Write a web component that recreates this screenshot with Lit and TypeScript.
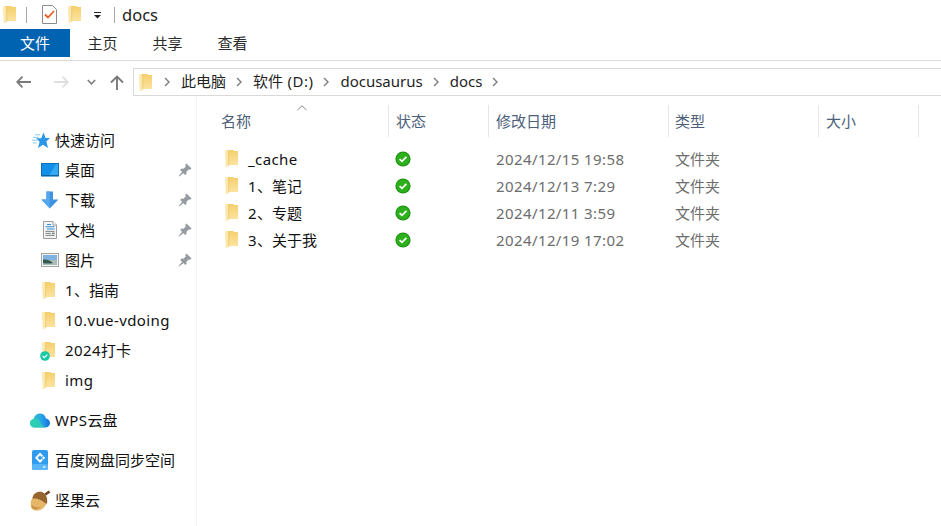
import { LitElement, html, css } from "lit";
import { customElement } from "lit/decorators.js";

let uid = 0;
const folder = () => {
  const id = "f" + uid++;
  return html`<svg class="ico-folder" width="13" height="19" viewBox="0 0 13 19">
    <defs><linearGradient id=${id} x1="0" y1="0" x2="0" y2="1"><stop offset="0" stop-color="#f5cf6c"/><stop offset="1" stop-color="#fbe3a0"/></linearGradient></defs>
    <path d="M2 1H8.5L9 2H13V16H2Z" fill="url(#${id})"/>
    <path d="M0 1.5L3.4 1V4L3.8 17L0.8 18.6Z" fill="#fae8ae"/>
    <path d="M3.4 1H4.2V16.6H3.4Z" fill="#eec765"/>
  </svg>`;
};

/* Latin and digit runs are slightly wider in the reference's UI font */
const txt = (s: string) =>
  (s.match(/[\x21-\x7e]+|[^\x21-\x7e]+/g) ?? []).map((p) =>
    /^[\x21-\x7e]/.test(p) ? html`<span class="l">${p}</span>` : p
  );

const check = html`<svg width="16" height="16" viewBox="0 0 16 16">
  <circle cx="8" cy="8" r="7.6" fill="#1f9212"/>
  <circle cx="8" cy="8" r="6.5" fill="#2cb01b"/>
  <path d="M4.6 8.1L7 10.4L11.4 5.9" fill="none" stroke="#fff" stroke-width="1.7"/>
</svg>`;

const pin = html`<svg class="pin" width="14" height="14" viewBox="0 0 14 14">
  <path d="M8.4 0.4L13.6 5.6L12 6.8L10.8 6.4L8.4 8.8L8.6 10.8L7.2 12L2.2 7L3.4 5.6L5.4 5.8L7.8 3.4L7.2 2Z" fill="#959ba1"/>
  <path d="M4.4 8.4L5.8 9.8L1.2 13.6L0.6 13Z" fill="#959ba1"/>
</svg>`;

const star = html`<svg width="18" height="17" viewBox="0 0 18 17">
  <path d="M11.5 0.5L13.6 6H18L14.4 9.6L16 16L11 12.8L6 16L7.6 9.8L4 6.2H9.2Z" fill="#2b97e6"/>
  <path d="M1 5.4H6.5M0 8.2H5.2M1 11H4.6M3 2.8H8" stroke="#8ccbf2" stroke-width="1" fill="none"/>
</svg>`;

const desktop = html`<svg width="18" height="14" viewBox="0 0 18 14">
  <rect x="0.5" y="0.5" width="17" height="12.5" fill="#0f8fe8" stroke="#0a6fb8"/>
  <path d="M8 12.5L15 1H17V12.5Z" fill="#33a9f2"/>
  <path d="M1 12.6H17" stroke="#0a5f9e" stroke-width="1"/>
</svg>`;

const download = html`<svg width="18" height="18" viewBox="0 0 18 18">
  <path d="M5.4 0.5H12V8.5H17.4L8.8 17.5L0.4 8.5H5.4Z" fill="#3d93e0"/>
  <path d="M5.4 0.5H8.8V17.5L0.4 8.5H5.4Z" fill="#56a8ee"/>
</svg>`;

const doc = html`<svg width="14" height="18" viewBox="0 0 14 18">
  <path d="M0.5 0.5H10L13.5 4V17.5H0.5Z" fill="#f3f3f3" stroke="#9d9d9d"/>
  <path d="M10 0.5V4H13.5" fill="#fff" stroke="#9d9d9d"/>
  <path d="M4 3.5H8M2.5 5.8H11.5M4 8H11.5" stroke="#2d90dd" stroke-width="1.1"/>
  <path d="M2.5 10.4H11.5M2.5 12.4H8M2.5 14.4H11.5" stroke="#7d8285" stroke-width="1"/>
  <rect x="9" y="11.6" width="2.6" height="1.6" fill="#7d8285"/>
</svg>`;

const picture = html`<svg width="18" height="14" viewBox="0 0 18 14">
  <rect x="0.5" y="0.5" width="17" height="13" fill="#f2f2f2" stroke="#a5a5a5"/>
  <rect x="2" y="2" width="14" height="5" fill="#7fb3df"/>
  <path d="M2 7H16V12H2Z" fill="#a9bdb6"/>
  <path d="M2 6.6C6 6 10 8 12 10C9 11 5 10.4 2 10.2Z" fill="#33584f"/>
</svg>`;

const wps = html`<svg width="20" height="15" viewBox="0 0 20 15">
  <defs><linearGradient id="wpsg" x1="0" y1="0" x2="1" y2="0"><stop offset="0" stop-color="#2fd0b0"/><stop offset="0.55" stop-color="#2aa6e8"/><stop offset="1" stop-color="#1173dc"/></linearGradient></defs>
  <path d="M4.5 14.5C1.8 14.5 0 12.6 0 10.2C0 8 1.6 6.4 3.6 6.1C4.4 2.6 7 0.5 10 0.5C13 0.5 15.4 2.5 15.9 5.4C18.2 5.8 20 7.6 20 10C20 12.6 18 14.5 15.4 14.5Z" fill="url(#wpsg)"/>
  <path d="M3.6 6.1C6 4.6 9 6 10 8.5C11 11 13 12.5 15.4 14.5H4.5C1.8 14.5 0 12.6 0 10.2C0 8 1.6 6.4 3.6 6.1Z" fill="#2fd3ae" opacity="0.75"/>
</svg>`;

const baidu = html`<svg width="16" height="20" viewBox="0 0 16 20">
  <rect x="0" y="0" width="16" height="20" rx="2" fill="#2f9cf0"/>
  <rect x="0" y="14" width="16" height="6" rx="1.5" fill="#5ab7f7"/>
  <path d="M8 2.6L11 5.6L9.6 7L8 5.4L5.6 7.8L8 10.2L9.6 8.6L11 10L8 13L3 7.8Z" fill="#fff"/>
  <path d="M10 7.8L11.6 6.2L13.2 7.8L11.6 9.4Z" fill="#fff"/>
  <rect x="11" y="16.4" width="2.5" height="1.2" fill="#fff"/>
</svg>`;

const acorn = html`<svg width="21" height="21" viewBox="0 0 21 21">
  <path d="M3.4 6.6C1 9.6 -0.2 14 1.2 17.4C2 19.6 4.6 21 8 20.6C11.6 20 15 17.8 16.6 13.2Z" fill="#e6b768"/>
  <path d="M2 15C4 17 8 18 11 16.6C8.6 19.4 3.6 20.4 1.6 17.6Z" fill="#c9934a"/>
  <path d="M2.6 7.6C3.2 3.8 7 1 11.2 1.8C15 2.6 17.8 6.8 17.2 12.6C17 14.4 15.6 13.6 14.4 12.6C11 10 6.6 8 3.8 8.6C3 8.8 2.5 8.4 2.6 7.6Z" fill="#96652f"/>
  <path d="M14.6 3.6L18.6 0.6L20.4 2.4L16 5.6Z" fill="#6e4520"/>
</svg>`;

const chev = html`<svg class="chev" width="7" height="10" viewBox="0 0 7 10"><path d="M1 1L5 5L1 9" fill="none" stroke="#7d7d7d" stroke-width="1.4"/></svg>`;

const quick = [
  { icon: desktop, name: "桌面" },
  { icon: download, name: "下载" },
  { icon: doc, name: "文档" },
  { icon: picture, name: "图片" },
];

const recent = ["1、指南", "10.vue-vdoing", "2024打卡", "img"];

const files = [
  { name: "_cache", date: "2024/12/15 19:58" },
  { name: "1、笔记", date: "2024/12/13 7:29" },
  { name: "2、专题", date: "2024/12/11 3:59" },
  { name: "3、关于我", date: "2024/12/19 17:02" },
];

@customElement("app-root")
export class AppRoot extends LitElement {
  static styles = css`
    :host {
      display: flex;
      flex-direction: column;
      width: 941px;
      height: 526px;
      overflow: hidden;
      background: #fff;
      color: #111;
      font-family: "Noto Sans", "Noto Sans CJK SC", sans-serif;
      font-size: 15px;
      line-height: 20px;
    }
    svg { display: block; flex: none; }
    .l { letter-spacing: 0.4px; }
    .title {
      height: 29px;
      display: flex;
      align-items: center;
      flex: none;
      padding-left: 3px;
    }
    .title .sep { width: 1px; height: 16px; background: #a8a8a8; }
    .title .name { font-size: 16.5px; margin-left: 7px; color: #222; }
    .check-doc { margin: 0 11px 0 15px; }
    .dd { margin: 0 12px 0 12px; }
    .s1 { margin-left: 10px; }
    .tabs { height: 28px; display: flex; flex: none; }
    .tab { width: 65px; text-align: center; line-height: 28px; color: #2b2b2b; }
    .tab.file { width: 70px; background: #0063b1; color: #fff; }
    .nav-line { height: 1px; background: #dcdcdc; flex: none; margin-top: 3px; }
    .nav {
      height: 28px;
      flex: none;
      display: flex;
      align-items: center;
      margin-top: 7px;
      padding-left: 16px;
    }
    .fwd { margin-left: 23px; }
    .down { margin-left: 18px; }
    .up { margin-left: 14px; margin-right: 9px; }
    .addr {
      flex: 1;
      height: 28px;
      box-sizing: border-box;
      border: 1px solid #d9d9d9;
      border-right: 0;
      display: flex;
      align-items: center;
      padding-left: 5px;
      color: #1f1f1f;
    }
    .addr span.t { position: relative; top: -1px; }
    .addr .chev { margin: 0 10px; }
    .addr .chev.first { margin-left: 12px; }
    .wide { letter-spacing: 0.5px; }
    .main { flex: 1; display: flex; min-height: 0; }
    .side {
      width: 197px;
      flex: none;
      box-sizing: border-box;
      border-right: 1px solid #f2f2f2;
      padding-top: 29px;
    }
    .row {
      height: 30px;
      display: flex;
      align-items: center;
      position: relative;
      white-space: nowrap;
    }
    .row .i { width: 24px; display: flex; justify-content: center; flex: none; position: relative; }
    .top { padding-left: 30px; gap: 1px; }
    .top .i { justify-content: flex-start; }
    .top .i.star { padding-left: 2px; width: 22px; }
    .top .i.baidu { padding-left: 2px; width: 22px; }
    .sub { padding-left: 38px; gap: 3px; }
    .sub .ico-folder { margin-right: 3px; }
    .row .pin { position: absolute; left: 178px; top: 8px; }
    .gap { margin-top: 10px; }
    .badge { position: absolute; left: 2px; top: 10px; }
    .content { flex: 1; padding-left: 23px; min-width: 0; }
    .head {
      display: flex;
      height: 32px;
      margin-top: 9px;
      color: #4c607a;
    }
    .h { box-sizing: border-box; border-right: 1px solid #e6e6e6; padding: 6px 0 0 0; position: relative; }
    .h.c1 { width: 169px; padding-left: 1px; }
    .h.c2 { width: 100px; padding-left: 7px; }
    .h.c3 { width: 180px; padding-left: 7px; }
    .h.c4 { width: 150px; padding-left: 6px; }
    .h.c5 { width: 100px; padding-left: 7px; }
    .sort { position: absolute; left: 77px; top: 0; }
    .rows { margin-top: 8px; }
    .f { display: flex; height: 27px; align-items: center; white-space: nowrap; }
    .f .n { width: 175px; display: flex; align-items: center; padding-left: 5px; box-sizing: border-box; gap: 10px; }
    .f .st { width: 101px; }
    .f .d { width: 179px; color: #6d6d6d; }
    .f .ty { color: #6d6d6d; }
  `;

  render() {
    return html`
      <div class="title">
        ${folder()}
        <div class="sep s1"></div>
        <svg class="check-doc" width="15" height="19" viewBox="0 0 15 19">
          <path d="M0.5 0.5H10.5L14.5 4.5V18.5H0.5Z" fill="#fff" stroke="#8c8c8c"/>
          <path d="M3 9.5L6 12.5L12 6" fill="none" stroke="#e85a22" stroke-width="1.8"/>
        </svg>
        ${folder()}
        <svg class="dd" width="9" height="8" viewBox="0 0 9 8"><path d="M1 1.5H8" stroke="#222" stroke-width="1"/><path d="M1 4L4.5 7.5L8 4Z" fill="#222"/></svg>
        <div class="sep"></div>
        <div class="name">docs</div>
      </div>
      <div class="tabs">
        <div class="tab file">文件</div>
        <div class="tab">主页</div>
        <div class="tab">共享</div>
        <div class="tab">查看</div>
      </div>
      <div class="nav-line"></div>
      <div class="nav">
        <svg width="15" height="12" viewBox="0 0 15 12"><path d="M1 6H15M6.5 0.7L1.2 6L6.5 11.3" fill="none" stroke="#7a7a7a" stroke-width="1.8"/></svg>
        <svg class="fwd" width="15" height="12" viewBox="0 0 15 12"><path d="M0 6H14M8.5 0.7L13.8 6L8.5 11.3" fill="none" stroke="#dfdfdf" stroke-width="1.8"/></svg>
        <svg class="down" width="9" height="6" viewBox="0 0 9 6"><path d="M0.8 1L4.5 4.8L8.2 1" fill="none" stroke="#7d7d7d" stroke-width="1.6"/></svg>
        <svg class="up" width="14" height="15" viewBox="0 0 14 15"><path d="M7 15V1.5M1 7.5L7 1.5L13 7.5" fill="none" stroke="#7a7a7a" stroke-width="1.9"/></svg>
        <div class="addr">
          ${folder()}
          <svg class="chev first" width="7" height="10" viewBox="0 0 7 10"><path d="M1 1L5 5L1 9" fill="none" stroke="#7d7d7d" stroke-width="1.4"/></svg>
          <span class="t">此电脑</span>
          ${chev}<span class="t">软件<span class="wide"> (D:)</span></span>
          ${chev}<span class="t">docusaurus</span>
          ${chev}<span class="t">docs</span>
          ${chev}
        </div>
      </div>
      <div class="main">
        <div class="side">
          <div class="row top"><span class="i star">${star}</span>快速访问</div>
          ${quick.map(
            (q) => html`<div class="row sub"><span class="i">${q.icon}</span>${q.name}${pin}</div>`
          )}
          ${recent.map(
            (r, i) => html`<div class="row sub"><span class="i">${folder()}${i === 2
              ? html`<svg class="badge" width="10" height="10" viewBox="0 0 12 12"><circle cx="6" cy="6" r="5.8" fill="#16c9a4"/><path d="M3.2 6L5.2 8L8.8 4.4" fill="none" stroke="#fff" stroke-width="1.4"/></svg>`
              : ""}</span><span>${txt(r)}</span></div>`
          )}
          <div class="row top gap"><span class="i">${wps}</span><span>${txt("WPS云盘")}</span></div>
          <div class="row top gap"><span class="i baidu">${baidu}</span>百度网盘同步空间</div>
          <div class="row top gap"><span class="i">${acorn}</span>坚果云</div>
        </div>
        <div class="content">
          <div class="head">
            <div class="h c1">名称<svg class="sort" width="10" height="6" viewBox="0 0 10 6"><path d="M0.5 5L5 0.8L9.5 5" fill="none" stroke="#8a8a8a" stroke-width="1"/></svg></div>
            <div class="h c2">状态</div>
            <div class="h c3">修改日期</div>
            <div class="h c4">类型</div>
            <div class="h c5">大小</div>
          </div>
          <div class="rows">
            ${files.map(
              (f) => html`<div class="f">
                <div class="n">${folder()}<span>${txt(f.name)}</span></div>
                <div class="st">${check}</div>
                <div class="d"><span class="l">${f.date}</span></div>
                <div class="ty">文件夹</div>
              </div>`
            )}
          </div>
        </div>
      </div>
    `;
  }
}
